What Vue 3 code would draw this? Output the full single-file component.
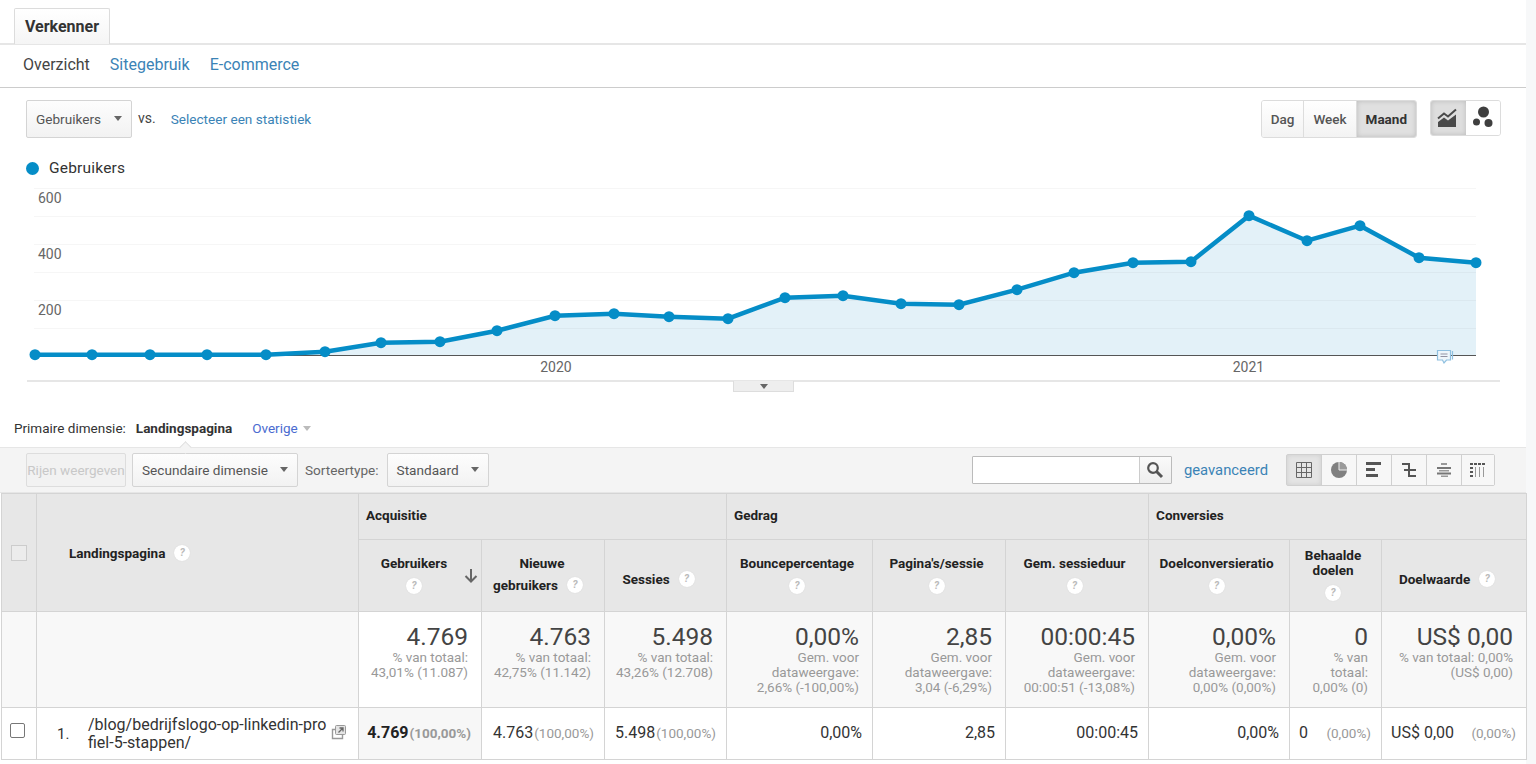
<script setup>
const points = [
  [35, 354], [92, 354], [150, 354], [207, 354], [266, 354], [325, 351], [381, 342], [440, 341],
  [497, 330], [555, 315], [614, 313], [669, 316], [728, 318], [785, 297], [843, 295], [901, 303],
  [959, 304], [1017, 289], [1074, 272], [1133, 262], [1191, 261], [1249, 215], [1307, 240],
  [1360, 225], [1419, 257], [1476, 262],
].map(([x, y]) => [x, y + 0.7])
const linePoints = points.map(p => p.join(',')).join(' ')
const areaPoints = `35,355 ${linePoints} 1476,355`
const gridLines = [188, 216, 244, 272, 300, 328]
const yLabels = [
  { y: 203, text: '600' },
  { y: 259, text: '400' },
  { y: 315, text: '200' },
]

const groups = [
  { name: 'Acquisitie', span: 3 },
  { name: 'Gedrag', span: 3 },
  { name: 'Conversies', span: 3 },
]

const columns = [
  {
    lines: ['Gebruikers'], helpBelow: true, sorted: true, value: '4.769',
    sub: ['% van totaal:', '43,01% (11.087)'], cell: '4.769', pct: '(100,00%)', bold: true, active: true,
  },
  {
    lines: ['Nieuwe', 'gebruikers'], value: '4.763', tallLines: true,
    sub: ['% van totaal:', '42,75% (11.142)'], cell: '4.763', pct: '(100,00%)',
  },
  {
    lines: ['Sessies'], value: '5.498', lowered: true,
    sub: ['% van totaal:', '43,26% (12.708)'], cell: '5.498', pct: '(100,00%)',
  },
  {
    lines: ['Bouncepercentage'], helpBelow: true, value: '0,00%',
    sub: ['Gem. voor', 'dataweergave:', '2,66% (-100,00%)'], cell: '0,00%',
  },
  {
    lines: ["Pagina's/sessie"], helpBelow: true, value: '2,85',
    sub: ['Gem. voor', 'dataweergave:', '3,04 (-6,29%)'], cell: '2,85',
  },
  {
    lines: ['Gem. sessieduur'], helpBelow: true, value: '00:00:45',
    sub: ['Gem. voor', 'dataweergave:', '00:00:51 (-13,08%)'], cell: '00:00:45',
  },
  {
    lines: ['Doelconversieratio'], helpBelow: true, value: '0,00%',
    sub: ['Gem. voor', 'dataweergave:', '0,00% (0,00%)'], cell: '0,00%',
  },
  {
    lines: ['Behaalde', 'doelen'], helpBelow: true, value: '0',
    sub: ['% van', 'totaal:', '0,00% (0)'], cell: '0', pct: '(0,00%)', spread: true,
  },
  {
    lines: ['Doelwaarde'], value: 'US$ 0,00', lowered: true,
    sub: ['% van totaal: 0,00%', '(US$ 0,00)'], cell: 'US$ 0,00', pct: '(0,00%)', spread: true,
  },
]
</script>

<template>
  <div class="page">
    <div class="tabs">
      <div class="tab">Verkenner</div>
    </div>

    <nav class="subnav">
      <span class="subnav-current">Overzicht</span>
      <a>Sitegebruik</a>
      <a>E-commerce</a>
    </nav>

    <div class="controls">
      <div class="controls-left">
        <button class="select metric-select">Gebruikers<i class="caret"></i></button>
        <span class="vs">vs.</span>
        <a class="pick-metric">Selecteer een statistiek</a>
      </div>
      <div class="controls-right">
        <div class="btn-group">
          <button class="period">Dag</button>
          <button class="period">Week</button>
          <button class="period on">Maand</button>
        </div>
        <div class="btn-group chart-type">
          <button class="type on">
            <svg width="22" height="22" viewBox="0 0 22 22">
              <path d="M1 20v-5l6-4.500 4 3 8-6v12.500z" fill="#4a4a4a" />
              <path d="M1 11.500l6-5 4 3 8-7" fill="none" stroke="#4a4a4a" stroke-width="2" />
            </svg>
          </button>
          <button class="type">
            <svg width="24" height="24" viewBox="0 0 24 24" fill="#3f3f3f">
              <circle cx="12.500" cy="6" r="5.500" />
              <circle cx="5.500" cy="16" r="3.500" />
              <circle cx="17.500" cy="17" r="4" />
            </svg>
          </button>
        </div>
      </div>
    </div>

    <div class="legend"><i class="dot"></i>Gebruikers</div>

    <div class="chart">
      <svg class="chart-svg" width="1526" height="207" viewBox="0 186 1526 207">
        <polygon :points="areaPoints" fill="#e3f1f8" />
        <line v-for="y in gridLines" :key="y" x1="34" x2="1476" :y1="y + 0.5" :y2="y + 0.5" stroke="#000" stroke-opacity="0.035" />
        <line x1="34" x2="1476" y1="355.500" y2="355.500" stroke="#555" />
        <polyline :points="linePoints" fill="none" stroke="#058dc7" stroke-width="4.500" />
        <circle v-for="p in points" :key="p[0]" :cx="p[0]" :cy="p[1]" r="5.500" fill="#058dc7" />
        <text v-for="l in yLabels" :key="l.text" x="38" :y="l.y" class="axis-label">{{ l.text }}</text>
        <text x="556" y="372" text-anchor="middle" class="axis-label">2020</text>
        <text x="1248.500" y="372" text-anchor="middle" class="axis-label">2021</text>
        <path d="M1437.500 350.500h13v9.500h-4l-2.500 3-1.500-3h-5z" fill="#eef6fb" stroke="#8fc0e0" stroke-width="1.200" />
        <path d="M1452.500 351v8.500" stroke="#8fc0e0" stroke-width="1.200" />
        <path d="M1440.500 354h7M1440.500 356.500h7" stroke="#889" stroke-width="0.900" />
        <line x1="27" x2="1500" y1="381" y2="381" stroke="#e6e6e6" stroke-width="2" />
      </svg>
      <div class="collapse"><i class="caret"></i></div>
    </div>

    <div class="dimension">
      <span>Primaire dimensie:</span>
      <strong>Landingspagina</strong>
      <a>Overige<i class="caret light"></i></a>
    </div>

    <div class="toolbar">
      <div class="toolbar-left">
        <button class="btn disabled">Rijen weergeven</button>
        <button class="select second-dim">Secundaire dimensie<i class="caret"></i></button>
        <span class="sort-label">Sorteertype:</span>
        <button class="select sort-type">Standaard<i class="caret"></i></button>
      </div>
      <div class="toolbar-right">
        <div class="search">
          <div class="search-field"></div>
          <button class="search-btn">
            <svg width="18" height="18" viewBox="0 0 18 18" fill="none" stroke="#555">
              <circle cx="7" cy="7" r="4.800" stroke-width="2.200" />
              <path d="M10.500 10.500l5.500 5.500" stroke-width="3" />
            </svg>
          </button>
        </div>
        <a class="advanced">geavanceerd</a>
        <div class="views">
          <button class="view on">
            <svg width="16" height="16" viewBox="0 0 16 16" fill="none" stroke="#666">
              <path d="M.5.500h15v15H.5zM5.500.500v15M10.500.500v15M.5 5.500h15M.5 10.500h15" />
            </svg>
          </button>
          <button class="view">
            <svg width="16" height="16" viewBox="0 0 16 16">
              <circle cx="8" cy="8" r="8" fill="#808080" />
              <path d="M8 0v8h8A8 8 0 0 0 8 0z" fill="#9a9a9a" />
              <path d="M8 0v8h8" fill="none" stroke="#eee" />
            </svg>
          </button>
          <button class="view">
            <svg width="16" height="16" viewBox="0 0 16 16" fill="#555">
              <rect x="0" y="0" width="15" height="3" />
              <rect x="0" y="6" width="9" height="3" />
              <rect x="0" y="12" width="12" height="3" />
            </svg>
          </button>
          <button class="view">
            <svg width="16" height="16" viewBox="0 0 16 16" fill="#555">
              <rect x="1" y="1" width="8" height="2" />
              <rect x="7" y="1" width="2" height="13" />
              <rect x="3" y="7" width="12" height="2" />
              <rect x="7" y="13" width="8" height="2" />
            </svg>
          </button>
          <button class="view">
            <svg width="16" height="16" viewBox="0 0 16 16" fill="#999">
              <rect x="5" y="1" width="6" height="2" />
              <rect x="1" y="5" width="14" height="2" fill="#777" />
              <rect x="3" y="8" width="10" height="1.500" />
              <rect x="1" y="10.500" width="14" height="2" fill="#777" />
              <rect x="5" y="13.500" width="7" height="1.500" />
            </svg>
          </button>
          <button class="view">
            <svg width="16" height="16" viewBox="0 0 16 16" fill="#555">
              <rect x="0" y="1" width="3" height="2" />
              <rect x="4" y="1" width="3" height="2" />
              <rect x="8" y="1" width="3" height="2" />
              <rect x="12" y="1" width="3" height="2" />
              <rect x="0" y="5" width="3" height="2" />
              <rect x="0" y="9" width="3" height="2" />
              <rect x="0" y="13" width="3" height="2" />
              <rect x="5" y="5" width="1" height="10" fill="#999" />
              <rect x="9" y="5" width="1" height="10" fill="#999" />
              <rect x="13" y="5" width="1" height="10" fill="#999" />
            </svg>
          </button>
        </div>
      </div>
    </div>

    <table class="report">
      <colgroup>
        <col style="width: 35px" />
        <col style="width: 322px" />
        <col style="width: 123px" />
        <col style="width: 123px" />
        <col style="width: 122px" />
        <col style="width: 146px" />
        <col style="width: 133px" />
        <col style="width: 143px" />
        <col style="width: 141px" />
        <col style="width: 92px" />
        <col style="width: 145px" />
      </colgroup>
      <thead>
        <tr class="group-row">
          <th rowspan="2" class="check-head"><i class="checkbox faded"></i></th>
          <th rowspan="2" class="dim-head">Landingspagina<i class="help inline"></i></th>
          <th v-for="g in groups" :key="g.name" :colspan="g.span" class="group">{{ g.name }}</th>
        </tr>
        <tr class="metric-row">
          <th v-for="c in columns" :key="c.lines[0]" class="metric" :class="{ sorted: c.sorted, lowered: c.lowered, 'has-tall': c.tallLines }">
            <template v-if="c.tallLines">
              <div class="tall">{{ c.lines[0] }}</div>
              <div class="tall second">{{ c.lines[1] }}<i class="help inline"></i></div>
            </template>
            <template v-else>
              <div v-for="line in c.lines" :key="line" class="metric-line">
                {{ line }}<i v-if="!c.helpBelow" class="help inline"></i>
              </div>
              <i v-if="c.helpBelow" class="help below"></i>
            </template>
            <svg v-if="c.sorted" class="sort-arrow" width="14" height="14" viewBox="0 0 14 14" fill="none" stroke="#666" stroke-width="2">
              <path d="M7 0v12M1.500 7L7 12.500 12.500 7" />
            </svg>
          </th>
        </tr>
      </thead>
      <tbody>
        <tr class="total-row">
          <td></td>
          <td></td>
          <td v-for="c in columns" :key="c.lines[0]" class="total" :class="{ active: c.active }">
            <div class="total-value">{{ c.value }}</div>
            <div v-for="s in c.sub" :key="s" class="total-sub">{{ s }}</div>
          </td>
        </tr>
        <tr class="data-row">
          <td class="check-cell"><i class="checkbox"></i></td>
          <td class="page-cell">
            <div class="page-inner">
              <span class="index">1.</span>
              <span class="page-path">/blog/bedrijfslogo-op-linkedin-pro<br />fiel-5-stappen/</span>
              <svg class="open-link" width="16" height="16" viewBox="0 0 16 16" fill="none" stroke="#999">
                <rect x="4.500" y="1.500" width="10" height="9" rx="1" fill="#e4e4e4" />
                <path d="M4 5.500H1.500v9h10V11" stroke-width="1.400" />
                <path d="M7.500 8.500l4-4M8.500 4h3.500v3.500" stroke="#666" stroke-width="1.300" />
              </svg>
            </div>
          </td>
          <td v-for="c in columns" :key="c.lines[0]" class="value" :class="{ active: c.active }">
            <div v-if="c.pct" class="value-split" :class="{ spread: c.spread }">
              <span class="num" :class="{ bold: c.bold }">{{ c.cell }}</span>
              <span class="pct" :class="{ bold: c.bold }">{{ c.pct }}</span>
            </div>
            <span v-else class="num plain">{{ c.cell }}</span>
          </td>
        </tr>
      </tbody>
    </table>
  </div>
</template>

<style>
html, body {
  margin: 0;
  background: #fff;
}
</style>

<style scoped>
.page {
  position: relative;
  width: 1536px;
  height: 764px;
  overflow: hidden;
  box-sizing: border-box;
  padding-right: 10px;
  font-family: Roboto, "Liberation Sans", sans-serif;
  color: #333;
  background: linear-gradient(to right, #fff 1526px, #f7f8f9 1526px);
}

button {
  font-family: inherit;
  margin: 0;
}

.tabs {
  height: 45px;
  box-sizing: border-box;
  padding: 8px 0 0 14px;
  border-bottom: 2px solid #e6e6e6;
}

.tab {
  width: 96px;
  height: 36px;
  box-sizing: border-box;
  border: 1px solid #dcdcdc;
  border-bottom: none;
  border-radius: 2px 2px 0 0;
  background: linear-gradient(#fff, #f5f5f5);
  font-size: 16px;
  font-weight: 700;
  color: #333;
  line-height: 35px;
  text-align: center;
}

.subnav {
  height: 43px;
  box-sizing: border-box;
  border-bottom: 1px solid #ccc;
  display: flex;
  align-items: center;
  gap: 20px;
  padding: 0 0 3px 23px;
  font-size: 16px;
}

.subnav-current {
  color: #444;
}

.subnav a {
  color: #3b83b6;
}

.controls {
  height: 40px;
  margin-top: 12px;
  padding: 0 25px 0 26px;
  display: flex;
  justify-content: space-between;
  align-items: flex-start;
}

.controls-left,
.toolbar-left,
.toolbar-right {
  display: flex;
  align-items: center;
}

.controls-right {
  display: flex;
  gap: 13px;
  align-items: flex-start;
}

.select {
  display: flex;
  align-items: center;
  justify-content: space-between;
  box-sizing: border-box;
  border: 1px solid #d4d4d4;
  border-radius: 2px;
  background: linear-gradient(#fdfdfd, #f2f2f2);
  font-size: 13.600px;
  color: #555;
  padding: 0 9px 1px;
}

.metric-select {
  width: 106px;
  height: 38px;
}

.caret {
  display: inline-block;
  width: 0;
  height: 0;
  border-left: 4.500px solid transparent;
  border-right: 4.500px solid transparent;
  border-top: 5px solid #666;
}

.caret.light {
  border-top-color: #bbb;
  margin-left: 5px;
  vertical-align: 2px;
}

.vs {
  font-size: 14px;
  color: #444;
  margin: -3px 0 0 6px;
}

.pick-metric {
  font-size: 13.600px;
  color: #3b83b6;
  margin-left: 15px;
}

.btn-group {
  display: flex;
  border: 1px solid #dcdcdc;
  border-radius: 3px;
  overflow: hidden;
}

.period {
  height: 36px;
  border: none;
  border-right: 1px solid #ddd;
  background: linear-gradient(#fff, #f3f3f3);
  font-size: 13.500px;
  font-weight: 500;
  color: #555;
  padding: 0 9px;
}

.period:last-child {
  border-right: none;
}

.period.on {
  background: #e0e0e0;
  box-shadow: inset 0 0 5px #bbb;
  color: #333;
  font-weight: 700;
}

.type {
  width: 34.500px;
  height: 34px;
  padding: 0;
  border: none;
  background: #fff;
  display: flex;
  align-items: center;
  justify-content: center;
}

.type.on {
  background: #dedede;
  box-shadow: inset 0 0 5px #bbb;
}

.legend {
  display: flex;
  align-items: center;
  font-size: 15.500px;
  color: #333;
  height: 20px;
  margin-top: 18px;
  padding-left: 26px;
  letter-spacing: 0.200px;
}

.dot {
  width: 13px;
  height: 13px;
  border-radius: 50%;
  background: #058dc7;
  margin-right: 10px;
}

.chart {
  position: relative;
  height: 208px;
  margin-top: 8px;
}

.chart-svg {
  display: block;
}

.axis-label {
  font-family: Roboto, "Liberation Sans", sans-serif;
  font-size: 14px;
  fill: #666;
}

.collapse {
  position: absolute;
  left: 733px;
  top: 195px;
  width: 61px;
  height: 11px;
  box-sizing: border-box;
  background: #eee;
  border: 1px solid #ddd;
  border-top: none;
  display: flex;
  align-items: center;
  justify-content: center;
}

.dimension {
  display: flex;
  align-items: center;
  height: 20px;
  margin-top: 24px;
  padding-left: 14px;
  font-size: 13.500px;
  color: #333;
}

.dimension strong {
  font-weight: 700;
  margin-left: 10px;
}

.dimension a {
  color: #4a6bd0;
  margin-left: 20px;
}

.toolbar {
  position: relative;
  display: flex;
  justify-content: space-between;
  align-items: center;
  height: 46px;
  margin-top: 9px;
  box-sizing: border-box;
  background: #f4f4f4;
  border-top: 1px solid #e6e6e6;
  border-bottom: 1px solid #e6e6e6;
  padding: 0 31px 0 26px;
}

.toolbar::before {
  content: "";
  position: absolute;
  left: 181px;
  top: -5px;
  width: 8px;
  height: 8px;
  background: #f4f4f4;
  border-top: 1px solid #e0e0e0;
  border-left: 1px solid #e0e0e0;
  transform: rotate(45deg);
}

.btn {
  width: 100px;
  height: 34px;
  padding: 0 0 1px;
  border: 1px solid #ddd;
  border-radius: 2px;
  background: #f2f2f2;
  font-size: 13.500px;
  color: #c8c8c8;
  white-space: nowrap;
}

.second-dim {
  width: 166px;
  height: 34px;
  margin-left: 6px;
}

.sort-label {
  font-size: 13.600px;
  color: #666;
  margin: 0 8px 1px 7px;
}

.sort-type {
  width: 102px;
  height: 34px;
}

.search {
  display: flex;
  height: 28px;
  box-sizing: border-box;
  border: 1px solid #bbb;
  border-radius: 1px;
  background: #fff;
}

.search-field {
  width: 166px;
}

.search-btn {
  width: 32px;
  padding: 0;
  border: none;
  border-left: 1px solid #ccc;
  background: linear-gradient(#fafafa, #eee);
  display: flex;
  align-items: center;
  justify-content: center;
}

.advanced {
  color: #3b83b6;
  font-size: 14.800px;
  margin: 0 18px 0 12px;
}

.views {
  display: flex;
  border: 1px solid #d0d0d0;
  border-radius: 2px;
}

.view {
  width: 35px;
  height: 30px;
  padding: 0;
  border: none;
  border-right: 1px solid #d0d0d0;
  background: #f7f7f7;
  display: flex;
  align-items: center;
  justify-content: center;
}

.view:last-child {
  border-right: none;
  width: 32px;
}

.view.on {
  background: #e4e4e4;
  box-shadow: inset 0 0 4px #ccc;
}

.report {
  width: 1525px;
  margin-left: 1px;
  border-collapse: collapse;
  table-layout: fixed;
  color: #333;
}

.report th,
.report td {
  border: 1px solid #d4d4d4;
  box-sizing: border-box;
  padding: 0;
}

.report thead th {
  background: #e7e7e7;
  color: #222;
  font-size: 13.500px;
  font-weight: 700;
}

.group-row {
  height: 46px;
}

.group {
  text-align: left;
  padding: 0 0 3px 7px !important;
}

.metric-row {
  height: 72px;
}

.check-head {
  text-align: center;
}

.dim-head {
  text-align: left;
  padding-left: 32px !important;
}

.metric {
  position: relative;
  text-align: center;
  line-height: 15px;
  padding: 0 5px 2px 0 !important;
}

.metric.sorted {
  padding-right: 12px !important;
}

.metric.lowered {
  padding: 6px 14px 0 0 !important;
}

.metric.has-tall {
  padding: 0 2px 4px 0 !important;
}

.metric-line {
  line-height: 15px;
}

.tall {
  line-height: 22px;
}

.tall.second {
  padding-right: 8px;
}

.sort-arrow {
  position: absolute;
  right: 3px;
  top: 29px;
}

.help {
  display: inline-block;
  width: 16px;
  height: 16px;
  border-radius: 50%;
  background: #fff;
  box-shadow: 0 0 1px #ccc;
  position: relative;
  vertical-align: -3px;
}

.help::after {
  content: "?";
  position: absolute;
  inset: 0;
  font-size: 10.500px;
  font-weight: 700;
  line-height: 16px;
  text-align: center;
  color: #bbb;
}

.help.inline {
  margin-left: 9px;
}

.help.below {
  display: block;
  margin: 7px auto 0;
}

.checkbox {
  display: inline-block;
  width: 15px;
  height: 15px;
  box-sizing: border-box;
  border: 1.500px solid #777;
  border-radius: 2px;
  background: #fff;
  vertical-align: middle;
}

.checkbox.faded {
  width: 16px;
  height: 16px;
  border: 1px solid #ccc;
  background: #ececec;
  border-radius: 0;
}

.total-row {
  height: 96px;
  background: #f8f8f8;
}

.total {
  text-align: right;
  vertical-align: top;
  padding: 11px 13px 0 4px !important;
}

.total.active {
  background: #fff;
}

.value.active {
  background: #f7f7f7;
}

.total-value {
  font-size: 24.500px;
  line-height: 27px;
  color: #444;
}

.total-sub {
  font-size: 13.500px;
  line-height: 15px;
  color: #999;
  white-space: nowrap;
}

.data-row {
  height: 52px;
}

.check-cell {
  text-align: left;
  padding: 0 0 8px 8px !important;
}

.page-inner {
  display: flex;
  align-items: center;
}

.index {
  width: 31px;
  margin-left: 20px;
  font-size: 15px;
}

.page-path {
  font-size: 16px;
  line-height: 18px;
  width: 244px;
  white-space: nowrap;
}

.open-link {
  margin: -4px 0 0 -1px;
}

.value {
  font-size: 16px;
  padding: 0 10px 2px !important;
}

.value-split {
  display: flex;
  justify-content: flex-end;
  align-items: baseline;
  gap: 1px;
}

.value-split.spread {
  justify-content: space-between;
  margin-left: -1px;
}

.num.plain {
  display: block;
  text-align: right;
}

.num.bold {
  font-weight: 700;
  color: #222;
}

.pct {
  font-size: 13.500px;
  color: #999;
}

.pct.bold {
  font-weight: 700;
}
</style>
